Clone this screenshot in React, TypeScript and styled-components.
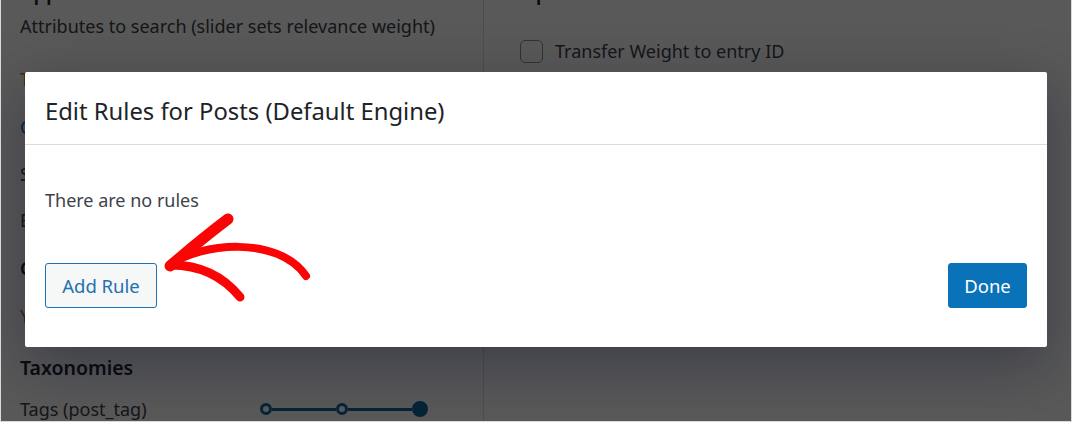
import React from 'react';
import styled, { createGlobalStyle } from 'styled-components';

const GlobalStyle = createGlobalStyle`
  html, body {
    margin: 0;
    padding: 0;
    background: #fff;
  }
  * {
    box-sizing: border-box;
  }
`;

const font = `"Noto Sans", "Open Sans", "Liberation Sans", sans-serif`;

const attributes = [
  { label: 'Title', color: '#c0772e', weight: 400, height: 48 },
  { label: 'Content', color: '#2271b1', weight: 400, height: 47 },
  { label: 'Slug', color: '#3c434a', weight: 400, height: 46 },
  { label: 'Excerpt', color: '#3c434a', weight: 400, height: 48 },
  { label: 'Custom Fields', color: '#1d2327', weight: 600, height: 48 },
  { label: 'Yoast', color: '#a4643a', weight: 400, height: 46 },
];

export default function App() {
  return (
    <>
      <GlobalStyle />
      <Frame>
        <Page>
          <LeftColumn>
            <CutHeading>Applicable Attributes</CutHeading>
            <Hint>Attributes to search (slider sets relevance weight)</Hint>
            <AttributeList>
              {attributes.map((a) => (
                <AttributeRow key={a.label} $color={a.color} $weight={a.weight} $height={a.height}>
                  {a.label}
                </AttributeRow>
              ))}
            </AttributeList>
            <SectionTitle>Taxonomies</SectionTitle>
            <SliderRow>
              <span>Tags (post_tag)</span>
              <Slider>
                <Knob />
                <Track />
                <Knob />
                <Track />
                <Knob $active />
              </Slider>
            </SliderRow>
          </LeftColumn>
          <RightColumn>
            <CutHeading>Options</CutHeading>
            <CheckRow>
              <CheckBox />
              <span>Transfer Weight to entry ID</span>
            </CheckRow>
          </RightColumn>
        </Page>

        <Overlay>
          <Modal>
            <ModalHeader>Edit Rules for Posts (Default Engine)</ModalHeader>
            <ModalBody>
              <Empty>There are no rules</Empty>
              <Actions>
                <SecondaryButton>Add Rule</SecondaryButton>
                <PrimaryButton>Done</PrimaryButton>
              </Actions>
              <Arrow viewBox="0 0 160 100" width="160" height="100">
                <path d="M68 14 C 52 26 30 44 10 61" strokeWidth="11" />
                <path d="M10 60 C 40 38 118 30 146 71" strokeWidth="8" />
                <path d="M11 60 C 40 60 62 70 80 92" strokeWidth="9" />
              </Arrow>
            </ModalBody>
          </Modal>
        </Overlay>
      </Frame>
    </>
  );
}

const Frame = styled.div`
  position: relative;
  width: 1072px;
  height: 422px;
  overflow: hidden;
  border: 1px solid #d9d9d9;
  border-top: none;
  font-family: ${font};
`;

const Page = styled.div`
  display: flex;
  height: 100%;
  background: #fff;
`;

const LeftColumn = styled.div`
  width: 483px;
  padding: 0 19px;
  border-right: 1px solid #dcdcde;
  display: flex;
  flex-direction: column;
`;

const RightColumn = styled.div`
  flex: 1;
  padding: 0 36px;
  display: flex;
  flex-direction: column;
`;

const CutHeading = styled.div`
  margin-top: -21px;
  font-size: 20px;
  font-weight: 600;
  color: #1d2327;
  height: 26px;
`;

const Hint = styled.div`
  margin-top: 9px;
  font-size: 18px;
  color: #3c434a;
  height: 53px;
`;

const AttributeList = styled.div`
  display: flex;
  flex-direction: column;
`;

const AttributeRow = styled.div<{ $color: string; $weight: number; $height: number }>`
  height: ${(p) => p.$height}px;
  font-size: 18px;
  color: ${(p) => p.$color};
  font-weight: ${(p) => p.$weight};
`;

const SectionTitle = styled.div`
  font-size: 19.5px;
  font-weight: 600;
  color: #1d2327;
  height: 43px;
  margin-top: 4px;
`;

const SliderRow = styled.div`
  display: flex;
  align-items: center;
  font-size: 18px;
  color: #3c434a;

  & > span {
    width: 240px;
  }
`;

const Slider = styled.div`
  display: flex;
  align-items: center;
`;

const Knob = styled.div<{ $active?: boolean }>`
  width: ${(p) => (p.$active ? 16 : 12)}px;
  height: ${(p) => (p.$active ? 16 : 12)}px;
  border-radius: 50%;
  border: 3px solid #12679d;
  background: ${(p) => (p.$active ? '#12679d' : '#fff')};
`;

const Track = styled.div`
  width: 64px;
  height: 3px;
  background: #12679d;
`;

const CheckRow = styled.div`
  margin-top: 34px;
  display: flex;
  align-items: center;
  gap: 12px;
  font-size: 18px;
  color: #3c434a;
`;

const CheckBox = styled.div`
  width: 23px;
  height: 23px;
  border: 1px solid #8c8f94;
  border-radius: 5px;
  background: #fff;
`;

const Overlay = styled.div`
  position: absolute;
  inset: 0;
  background: rgba(0, 0, 0, 0.65);
  padding: 72px 24px 0 24px;
`;

const Modal = styled.div`
  background: #fff;
  border-radius: 2px;
  box-shadow: 0 18px 60px rgba(10, 12, 40, 0.35);
`;

const ModalHeader = styled.div`
  height: 73px;
  padding: 5px 20px 0 20px;
  display: flex;
  align-items: center;
  border-bottom: 1px solid #dcdcde;
  font-size: 23.8px;
  color: #1d2327;
`;

const ModalBody = styled.div`
  position: relative;
  padding: 43px 20px 39px 20px;
`;

const Empty = styled.div`
  font-size: 18px;
  color: #3c434a;
  line-height: 24px;
`;

const Actions = styled.div`
  margin-top: 51px;
  display: flex;
  justify-content: space-between;
  align-items: center;
`;

const BaseButton = styled.button`
  height: 45px;
  padding: 0 12px;
  border-radius: 3px;
  font-family: ${font};
  font-size: 18.5px;
  cursor: pointer;
`;

const SecondaryButton = styled(BaseButton)`
  width: 112px;
  border: 1px solid #2271b1;
  background: #f6f7f7;
  color: #2271b1;
`;

const PrimaryButton = styled(BaseButton)`
  width: 79px;
  border: 1px solid #0a72b8;
  background: #0a72b8;
  color: #fff;
`;

const Arrow = styled.svg`
  position: absolute;
  left: 135px;
  top: 60px;
  overflow: visible;
  fill: none;
  stroke: #fa0505;
  stroke-linecap: round;
  stroke-linejoin: round;
`;
